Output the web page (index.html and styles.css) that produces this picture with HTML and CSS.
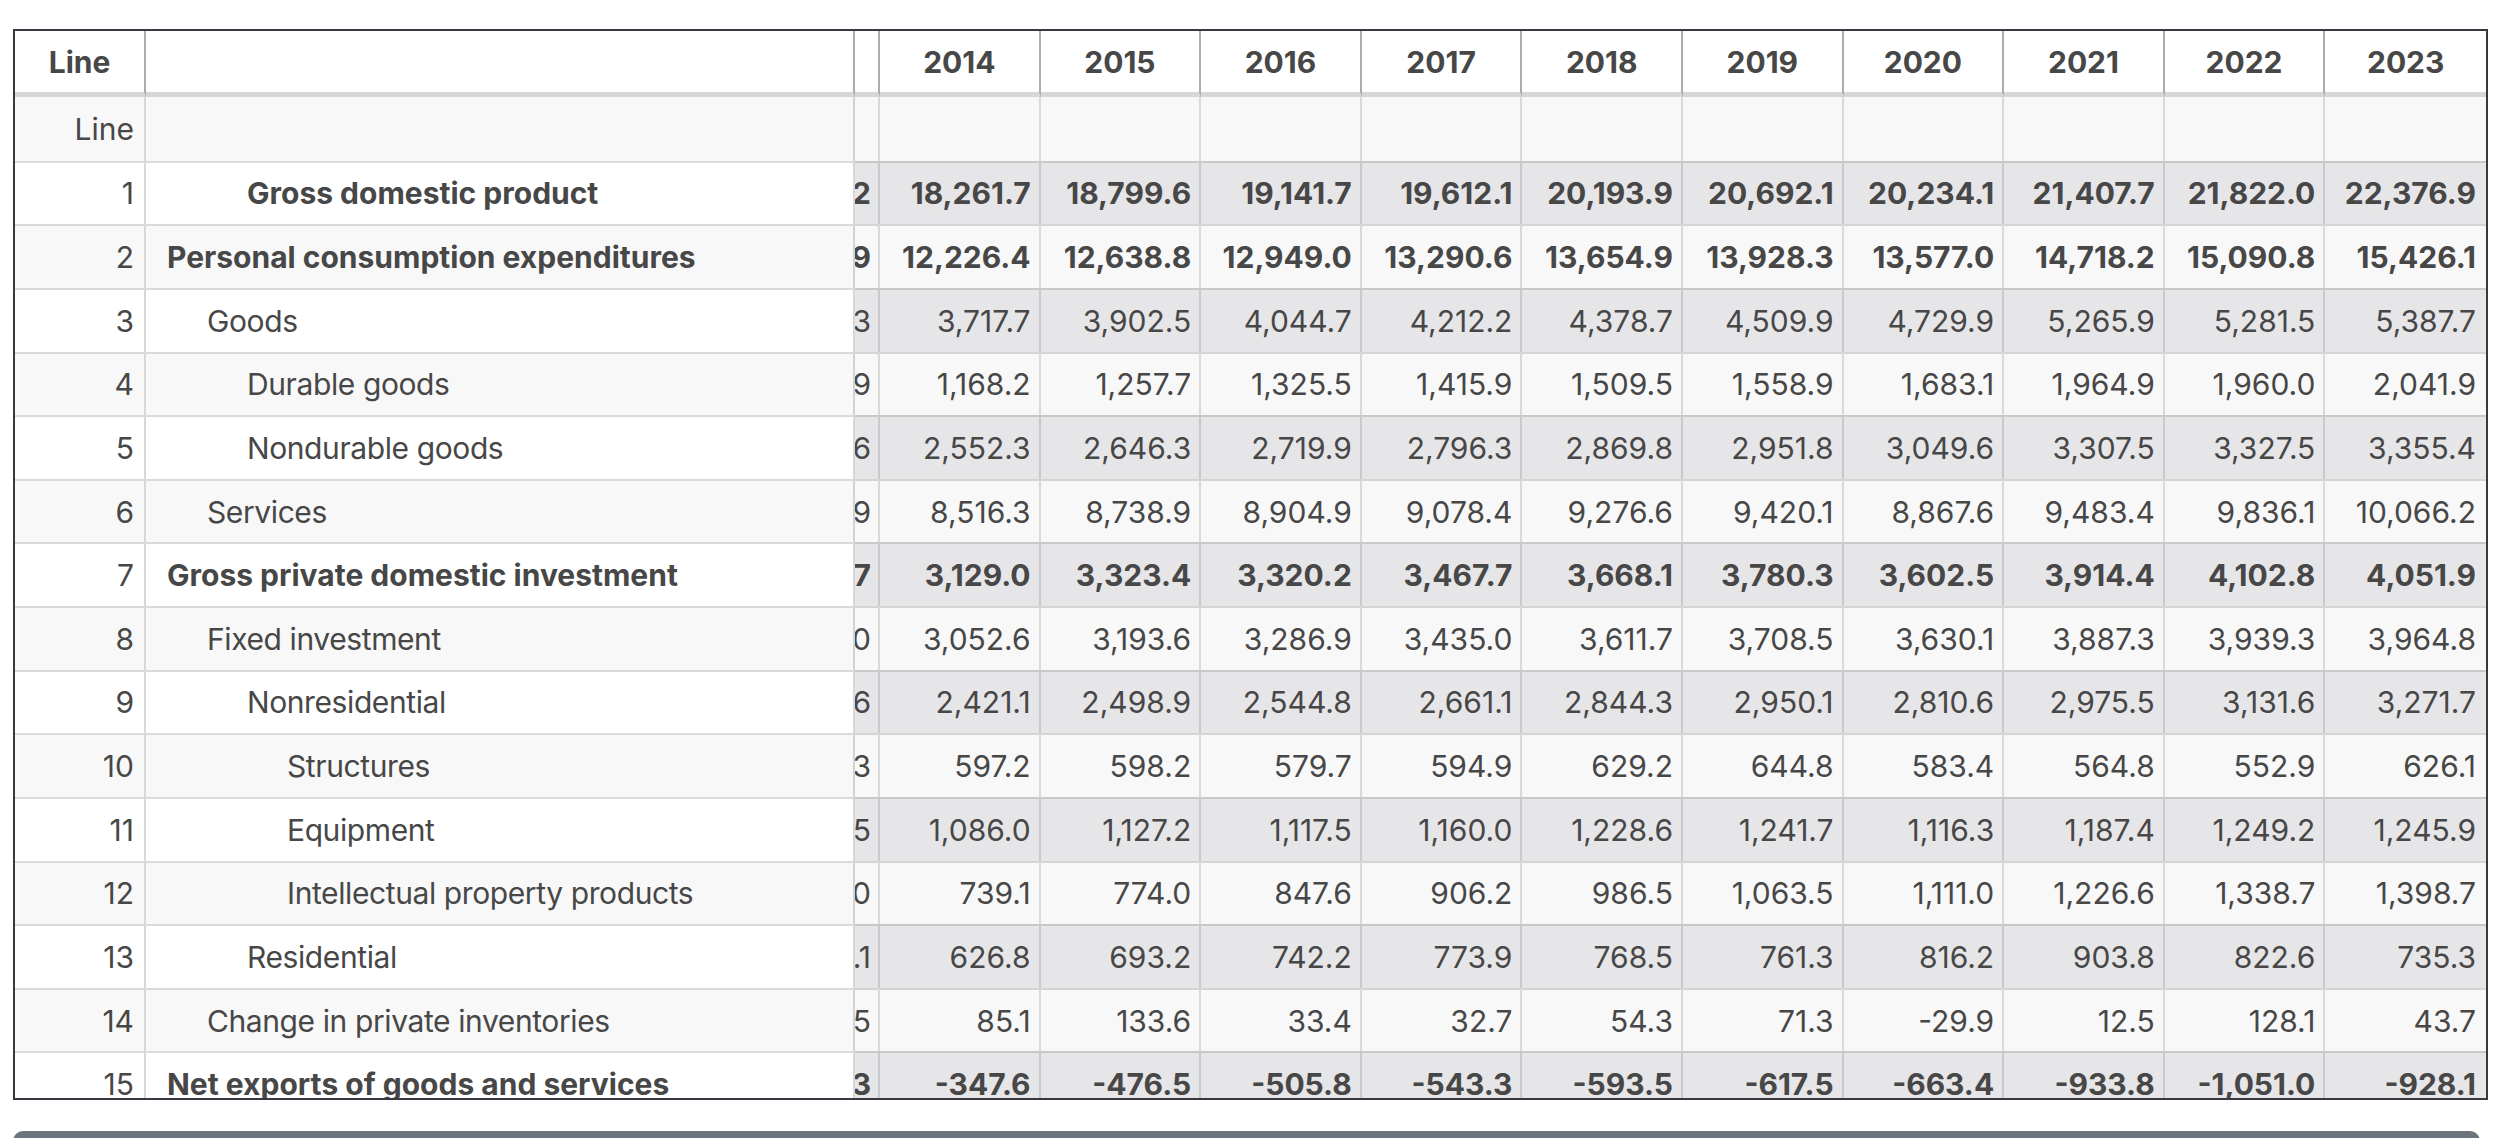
FILE: index.html
```html
<!DOCTYPE html>
<html lang="en">
<head>
<meta charset="utf-8">
<title>Real GDP table</title>
<link rel="stylesheet" href="styles.css">
</head>
<body>
<div class="page">
  <div class="scroller">
    <table class="data">
      <colgroup>
        <col class="c-line"><col class="c-label"><col class="c-prev">
        <col class="c-yr"><col class="c-yr"><col class="c-yr"><col class="c-yr"><col class="c-yr">
        <col class="c-yr"><col class="c-yr"><col class="c-yr"><col class="c-yr"><col class="c-yr">
      </colgroup>
      <thead>
        <tr>
          <th>Line</th><th></th><th></th>
          <th>2014</th><th>2015</th><th>2016</th><th>2017</th><th>2018</th>
          <th>2019</th><th>2020</th><th>2021</th><th>2022</th><th>2023</th>
        </tr>
      </thead>
      <tbody>
        <tr class="w">
          <td class="ln">Line</td><td class="lb"></td><td class="c"><div class="clip"></div></td>
          <td class="n"></td><td class="n"></td><td class="n"></td><td class="n"></td><td class="n"></td>
          <td class="n"></td><td class="n"></td><td class="n"></td><td class="n"></td><td class="n"></td>
        </tr>
        <tr class="g b">
          <td class="ln">1</td><td class="lb i2">Gross domestic product</td><td class="c"><div class="clip"><span>17,812.2</span></div></td>
          <td class="n">18,261.7</td><td class="n">18,799.6</td><td class="n">19,141.7</td><td class="n">19,612.1</td><td class="n">20,193.9</td>
          <td class="n">20,692.1</td><td class="n">20,234.1</td><td class="n">21,407.7</td><td class="n">21,822.0</td><td class="n">22,376.9</td>
        </tr>
        <tr class="w b">
          <td class="ln">2</td><td class="lb i0">Personal consumption expenditures</td><td class="c"><div class="clip"><span>11,891.9</span></div></td>
          <td class="n">12,226.4</td><td class="n">12,638.8</td><td class="n">12,949.0</td><td class="n">13,290.6</td><td class="n">13,654.9</td>
          <td class="n">13,928.3</td><td class="n">13,577.0</td><td class="n">14,718.2</td><td class="n">15,090.8</td><td class="n">15,426.1</td>
        </tr>
        <tr class="g">
          <td class="ln">3</td><td class="lb i1">Goods</td><td class="c"><div class="clip"><span>3,567.3</span></div></td>
          <td class="n">3,717.7</td><td class="n">3,902.5</td><td class="n">4,044.7</td><td class="n">4,212.2</td><td class="n">4,378.7</td>
          <td class="n">4,509.9</td><td class="n">4,729.9</td><td class="n">5,265.9</td><td class="n">5,281.5</td><td class="n">5,387.7</td>
        </tr>
        <tr class="w">
          <td class="ln">4</td><td class="lb i2">Durable goods</td><td class="c"><div class="clip"><span>1,075.9</span></div></td>
          <td class="n">1,168.2</td><td class="n">1,257.7</td><td class="n">1,325.5</td><td class="n">1,415.9</td><td class="n">1,509.5</td>
          <td class="n">1,558.9</td><td class="n">1,683.1</td><td class="n">1,964.9</td><td class="n">1,960.0</td><td class="n">2,041.9</td>
        </tr>
        <tr class="g">
          <td class="ln">5</td><td class="lb i2">Nondurable goods</td><td class="c"><div class="clip"><span>2,492.6</span></div></td>
          <td class="n">2,552.3</td><td class="n">2,646.3</td><td class="n">2,719.9</td><td class="n">2,796.3</td><td class="n">2,869.8</td>
          <td class="n">2,951.8</td><td class="n">3,049.6</td><td class="n">3,307.5</td><td class="n">3,327.5</td><td class="n">3,355.4</td>
        </tr>
        <tr class="w">
          <td class="ln">6</td><td class="lb i1">Services</td><td class="c"><div class="clip"><span>8,324.9</span></div></td>
          <td class="n">8,516.3</td><td class="n">8,738.9</td><td class="n">8,904.9</td><td class="n">9,078.4</td><td class="n">9,276.6</td>
          <td class="n">9,420.1</td><td class="n">8,867.6</td><td class="n">9,483.4</td><td class="n">9,836.1</td><td class="n">10,066.2</td>
        </tr>
        <tr class="g b">
          <td class="ln">7</td><td class="lb i0">Gross private domestic investment</td><td class="c"><div class="clip"><span>2,962.7</span></div></td>
          <td class="n">3,129.0</td><td class="n">3,323.4</td><td class="n">3,320.2</td><td class="n">3,467.7</td><td class="n">3,668.1</td>
          <td class="n">3,780.3</td><td class="n">3,602.5</td><td class="n">3,914.4</td><td class="n">4,102.8</td><td class="n">4,051.9</td>
        </tr>
        <tr class="w">
          <td class="ln">8</td><td class="lb i1">Fixed investment</td><td class="c"><div class="clip"><span>2,894.0</span></div></td>
          <td class="n">3,052.6</td><td class="n">3,193.6</td><td class="n">3,286.9</td><td class="n">3,435.0</td><td class="n">3,611.7</td>
          <td class="n">3,708.5</td><td class="n">3,630.1</td><td class="n">3,887.3</td><td class="n">3,939.3</td><td class="n">3,964.8</td>
        </tr>
        <tr class="g">
          <td class="ln">9</td><td class="lb i2">Nonresidential</td><td class="c"><div class="clip"><span>2,301.6</span></div></td>
          <td class="n">2,421.1</td><td class="n">2,498.9</td><td class="n">2,544.8</td><td class="n">2,661.1</td><td class="n">2,844.3</td>
          <td class="n">2,950.1</td><td class="n">2,810.6</td><td class="n">2,975.5</td><td class="n">3,131.6</td><td class="n">3,271.7</td>
        </tr>
        <tr class="w">
          <td class="ln">10</td><td class="lb i3">Structures</td><td class="c"><div class="clip"><span>595.3</span></div></td>
          <td class="n">597.2</td><td class="n">598.2</td><td class="n">579.7</td><td class="n">594.9</td><td class="n">629.2</td>
          <td class="n">644.8</td><td class="n">583.4</td><td class="n">564.8</td><td class="n">552.9</td><td class="n">626.1</td>
        </tr>
        <tr class="g">
          <td class="ln">11</td><td class="lb i3">Equipment</td><td class="c"><div class="clip"><span>1,018.5</span></div></td>
          <td class="n">1,086.0</td><td class="n">1,127.2</td><td class="n">1,117.5</td><td class="n">1,160.0</td><td class="n">1,228.6</td>
          <td class="n">1,241.7</td><td class="n">1,116.3</td><td class="n">1,187.4</td><td class="n">1,249.2</td><td class="n">1,245.9</td>
        </tr>
        <tr class="w">
          <td class="ln">12</td><td class="lb i3">Intellectual property products</td><td class="c"><div class="clip"><span>687.0</span></div></td>
          <td class="n">739.1</td><td class="n">774.0</td><td class="n">847.6</td><td class="n">906.2</td><td class="n">986.5</td>
          <td class="n">1,063.5</td><td class="n">1,111.0</td><td class="n">1,226.6</td><td class="n">1,338.7</td><td class="n">1,398.7</td>
        </tr>
        <tr class="g">
          <td class="ln">13</td><td class="lb i2">Residential</td><td class="c"><div class="clip"><span>589.1</span></div></td>
          <td class="n">626.8</td><td class="n">693.2</td><td class="n">742.2</td><td class="n">773.9</td><td class="n">768.5</td>
          <td class="n">761.3</td><td class="n">816.2</td><td class="n">903.8</td><td class="n">822.6</td><td class="n">735.3</td>
        </tr>
        <tr class="w">
          <td class="ln">14</td><td class="lb i1">Change in private inventories</td><td class="c"><div class="clip"><span>68.5</span></div></td>
          <td class="n">85.1</td><td class="n">133.6</td><td class="n">33.4</td><td class="n">32.7</td><td class="n">54.3</td>
          <td class="n">71.3</td><td class="n">-29.9</td><td class="n">12.5</td><td class="n">128.1</td><td class="n">43.7</td>
        </tr>
        <tr class="g b">
          <td class="ln">15</td><td class="lb i0">Net exports of goods and services</td><td class="c"><div class="clip"><span>-384.3</span></div></td>
          <td class="n">-347.6</td><td class="n">-476.5</td><td class="n">-505.8</td><td class="n">-543.3</td><td class="n">-593.5</td>
          <td class="n">-617.5</td><td class="n">-663.4</td><td class="n">-933.8</td><td class="n">-1,051.0</td><td class="n">-928.1</td>
        </tr>
        <tr class="w">
          <td class="ln">16</td><td class="lb i1">Exports</td><td class="c"><div class="clip"><span>2,377.4</span></div></td>
          <td class="n">2,490.8</td><td class="n">2,502.6</td><td class="n">2,512.7</td><td class="n">2,605.1</td><td class="n">2,677.2</td>
          <td class="n">2,690.3</td><td class="n">2,328.9</td><td class="n">2,462.9</td><td class="n">2,632.3</td><td class="n">2,701.4</td>
        </tr>
      </tbody>
    </table>
  </div>
  <div class="footer-bar"></div>
</div>
</body>
</html>
```

FILE: styles.css
```css
* {
  box-sizing: border-box;
}

html, body {
  margin: 0;
  background: #ffffff;
}

body {
  font-family: Inter, "Liberation Sans", Arial, sans-serif;
  color: #474747;
}

.page {
  padding: 29px 26px 0 13px;
}

.scroller {
  height: 1071px;
  border: 2px solid #343a40;
  overflow: hidden;
}

.data {
  border-collapse: separate;
  border-spacing: 0;
  table-layout: fixed;
  width: 2471px;
  font-size: 30px;
  line-height: 1.2;
}

.c-line { width: 131px; }
.c-label { width: 709px; }
.c-prev { width: 25px; }
.c-yr { width: 160.6px; }

.data thead tr {
  height: 66px;
}

.data th {
  padding: 0 10px;
  font-weight: 700;
  text-align: center;
  background: #ffffff;
  border-right: 2px solid #adadad;
  border-bottom: 5px solid #d6d6d6;
  white-space: nowrap;
}

.data th:last-child {
  border-right: 0;
}

.data tbody tr {
  height: 63.64px;
}

.data td {
  padding: 0 8px 0 10px;
  white-space: nowrap;
  border-right: 2px solid #dadada;
  background: #f8f8f8;
}

.data td:last-child {
  border-right: 0;
  padding-right: 10px;
}

.data tbody tr + tr td {
  border-top: 2px solid #d4d4d4;
}

.data td.ln {
  text-align: right;
  padding-right: 10px;
  border-right-color: #d8d8d8;
}

.data td.lb {
  text-align: left;
  letter-spacing: -0.4px;
  border-right-color: #d2d2d2;
}

.data td.n {
  text-align: right;
}

.data td.c {
  padding: 0 7px 0 0;
}

.clip {
  display: flex;
  justify-content: flex-end;
  overflow: hidden;
  width: 100%;
}

.clip span {
  flex: none;
}

/* gray (odd) rows */
.data tr.g td {
  background: #e6e5e7;
  border-right-color: #c9c8ca;
}

.data tbody tr.g td {
  border-top-color: #c8c8c8;
}

.data tr.g td.ln,
.data tr.g td.lb {
  background: #ffffff;
  border-right-color: #d8d8d8;
  border-top-color: #dadada;
}

.data tr.w td.ln,
.data tr.w td.lb {
  border-top-color: #dadada;
}

.data tr.b td.lb,
.data tr.b td.n,
.data tr.b td.c {
  font-weight: 700;
  letter-spacing: 0;
}

.i0 { padding-left: 21px !important; }
.i1 { padding-left: 61px !important; }
.i2 { padding-left: 101px !important; }
.i3 { padding-left: 141px !important; }

.footer-bar {
  margin-top: 31px;
  width: 2467px;
  height: 44px;
  background: #6c757d;
  border-radius: 10px 10px 0 0;
}
```
